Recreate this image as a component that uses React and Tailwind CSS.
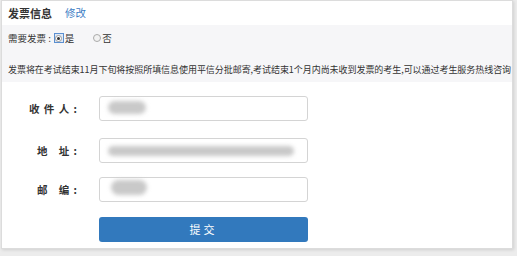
import React from 'react';

const font = { fontFamily: '"Microsoft YaHei", "Noto Sans CJK SC", sans-serif' };

const Blur = ({ className }) => (
  <div className={`absolute bg-[#c9c9c9] blur-[2px] rounded-full ${className}`} />
);

const Field = ({ label, className = '', children }) => (
  <div className={`flex items-center h-[25px] ${className}`}>
    <div className="w-[76px] text-right text-[10.5px] font-bold text-[#333] whitespace-pre tracking-[1px]">{label}</div>
    <div className="ml-[21px] relative w-[209px] h-[25px] border border-[#d4d4d4] rounded-[3px] bg-white">
      {children}
    </div>
  </div>
);

export default function App() {
  return (
    <div className="w-[517px] h-[256px] bg-[#ececec] overflow-hidden" style={font}>
      <div className="ml-[1px] w-[512px] h-[249px] bg-white border border-[#dcdcdc] shadow-[1px_1px_3px_rgba(0,0,0,0.12)]">
        {/* Title */}
        <div className="h-[24px] flex items-center pl-[6px]">
          <span className="text-[11px] font-bold text-[#333]">发票信息</span>
          <span className="ml-[13px] text-[10.5px] text-[#3b7cc4]">修改</span>
        </div>

        {/* Grey notice band */}
        <div className="h-[57px] bg-[#f6f6f8] pl-[6px] pt-[5px]">
          <div className="flex items-center h-[16px] text-[9.5px] text-[#333]">
            <span>需要发票 :</span>
            <span className="ml-[3px] w-[10px] h-[10px] border border-[#5b8fd0] bg-[#dfe9f7] flex items-center justify-center">
              <span className="w-[7px] h-[7px] rounded-full bg-white border border-[#999] flex items-center justify-center">
                <span className="w-[3px] h-[3px] rounded-full bg-[#333]" />
              </span>
            </span>
            <span className="ml-[1px]">是</span>
            <span className="ml-[19px] w-[8px] h-[8px] rounded-full border border-[#aaa] bg-[#f2f2f2]" />
            <span className="ml-[1px]">否</span>
          </div>
          <div className="mt-[18px] text-[9px] leading-[12px] text-[#333] whitespace-nowrap tracking-[-0.05px]">
            发票将在考试结束11月下旬将按照所填信息使用平信分批邮寄,考试结束1个月内尚未收到发票的考生,可以通过考生服务热线咨询
          </div>
        </div>

        {/* Form */}
        <div className="pt-[14px] flex flex-col">
          <Field label="收 件 人 :">
            <Blur className="left-[8px] top-[4px] w-[38px] h-[13px]" />
          </Field>
          <Field label="地   址 :" className="mt-[17px]">
            <Blur className="left-[8px] top-[7px] w-[186px] h-[10px] rounded-[3px]" />
          </Field>
          <Field label="邮   编 :" className="mt-[14px]">
            <Blur className="left-[11px] top-[2px] w-[36px] h-[15px]" />
          </Field>
          <div className="pl-[97px] mt-[15px]">
            <div className="w-[209px] h-[25px] rounded-[3px] bg-[#3279bd] flex items-center justify-center text-white text-[11px] tracking-[3px]">
              提交
            </div>
          </div>
        </div>
      </div>
    </div>
  );
}
